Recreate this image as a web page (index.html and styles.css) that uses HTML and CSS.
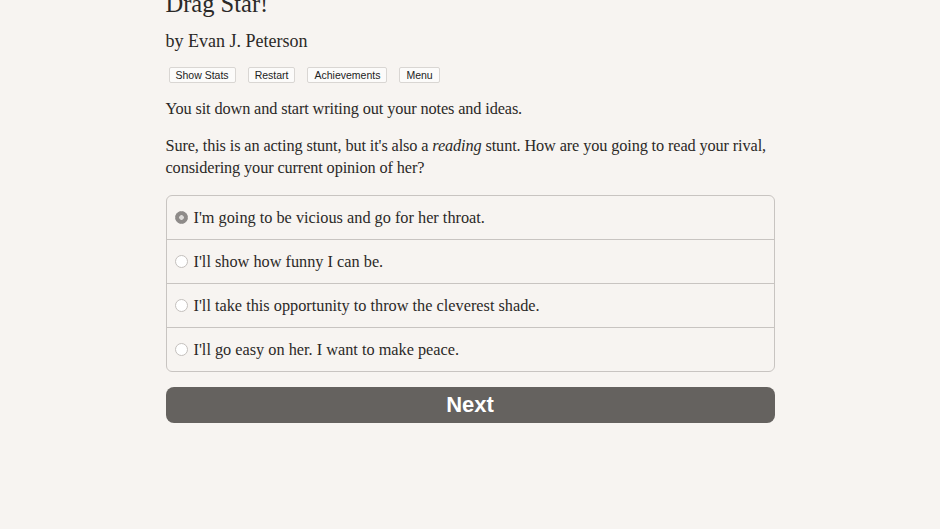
FILE: index.html
```html
<!DOCTYPE html>
<html>
<head>
<meta charset="utf-8">
<link rel="stylesheet" href="styles.css">
</head>
<body>
<div class="page">
  <h1 class="title">Drag Star!</h1>
  <h2 class="byline">by Evan J. Peterson</h2>
  <div class="toolbar">
    <button class="tbtn">Show Stats</button>
    <button class="tbtn">Restart</button>
    <button class="tbtn">Achievements</button>
    <button class="tbtn">Menu</button>
  </div>
  <p class="para">You sit down and start writing out your notes and ideas.</p>
  <p class="para">Sure, this is an acting stunt, but it's also a <i>reading</i> stunt. How are you going to read your rival, considering your current opinion of her?</p>
  <div class="choices">
    <div class="choice"><span class="radio selected"></span><span>I'm going to be vicious and go for her throat.</span></div>
    <div class="choice"><span class="radio"></span><span>I'll show how funny I can be.</span></div>
    <div class="choice"><span class="radio"></span><span>I'll take this opportunity to throw the cleverest shade.</span></div>
    <div class="choice"><span class="radio"></span><span>I'll go easy on her. I want to make peace.</span></div>
  </div>
  <button class="next">Next</button>
</div>
</body>
</html>
```

FILE: styles.css
```css
html, body {
  margin: 0;
  padding: 0;
  background: #f7f4f1;
}
body {
  font-family: "Liberation Serif", "Times New Roman", serif;
  color: #2b2927;
}
.page {
  width: 609px;
  margin: -11px auto 0;
}
.title {
  font-size: 24.5px;
  font-weight: normal;
  margin: 0;
  line-height: 30px;
}
.byline {
  font-size: 18px;
  font-weight: normal;
  margin: 10px 0 0;
  line-height: 24px;
}
.toolbar {
  display: flex;
  gap: 12px;
  margin: 14px 0 0 3px;
}
.tbtn {
  font-family: "Liberation Sans", Arial, sans-serif;
  font-size: 10.5px;
  color: #222;
  background: #fcfbfa;
  border: 1px solid #d9d6d3;
  border-radius: 2px;
  height: 16px;
  padding: 0 6px;
  line-height: 14px;
}
.para {
  font-size: 16.3px;
  line-height: 22px;
  letter-spacing: -0.12px;
  margin: 15px 0 0;
}
.para + .para {
  margin-top: 15px;
}
.choices {
  margin-top: 16px;
  border: 1px solid #c8c4c1;
  border-radius: 6px;
}
.choice {
  height: 43px;
  display: flex;
  align-items: center;
  font-size: 16.3px;
  padding-left: 8px;
  gap: 6px;
}
.choice + .choice {
  border-top: 1px solid #c8c4c1;
}
.radio {
  width: 13px;
  height: 13px;
  border-radius: 50%;
  border: 1px solid #c4c0bd;
  background: #fff;
  box-sizing: border-box;
  flex: none;
}
.radio.selected {
  background: radial-gradient(circle, #dcdad8 0 2px, #8e8b89 2.6px);
  border-color: #8e8b89;
}
.next {
  display: block;
  width: 100%;
  margin-top: 15px;
  height: 36px;
  border: none;
  border-radius: 8px;
  background: #65625f;
  color: #fff;
  font-family: "Liberation Sans", Arial, sans-serif;
  font-weight: bold;
  font-size: 22px;
}
```
